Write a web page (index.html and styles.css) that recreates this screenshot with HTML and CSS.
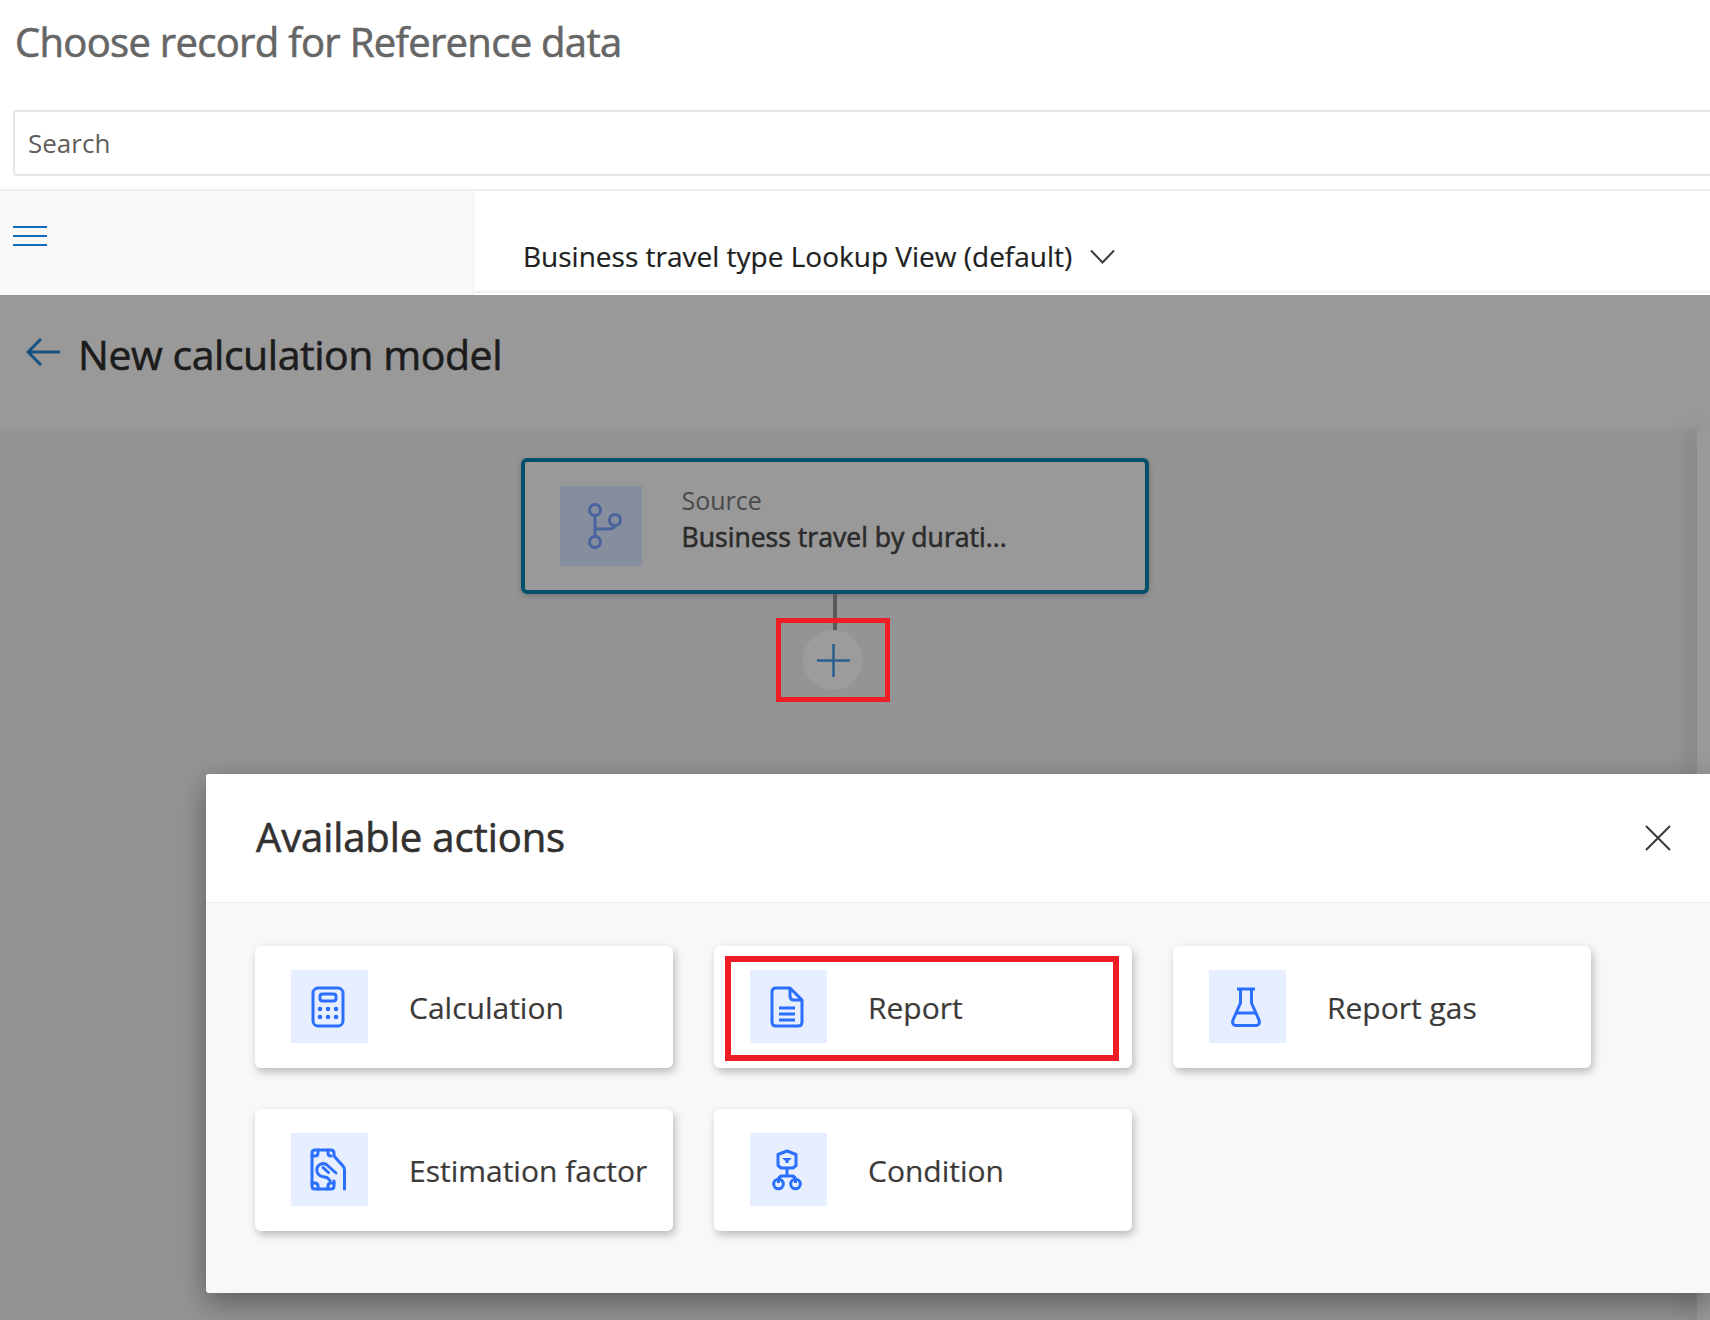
FILE: index.html
```html
<!DOCTYPE html>
<html lang="en">
<head>
  <meta charset="UTF-8">
  <title>New calculation model</title>
  <link rel="stylesheet" href="styles.css">
</head>
<body>
  <section class="picker">
    <h1>Choose record for Reference data</h1>
    <div class="search">Search</div>
    <div class="picker-row">
      <div class="nav">
        <svg class="burger" width="34" height="22" viewBox="0 0 34 22"><path d="M0 2h34M0 11h34M0 20h34" stroke="#0f6cbd" stroke-width="2" fill="none"/></svg>
      </div>
      <div class="view">
        <span>Business travel type Lookup View (default)</span>
        <svg width="25" height="15" viewBox="0 0 25 15"><path d="M1 1.500l11.500 12L24 1.500" stroke="#3a3a3a" stroke-width="2" fill="none"/></svg>
      </div>
    </div>
  </section>

  <main class="dimmed">
    <div class="title-bar">
      <svg class="back" width="34" height="30" viewBox="0 0 34 30"><path d="M15 2L2 15l13 13M2 15h32" stroke="#17507f" stroke-width="3" fill="none"/></svg>
      <h2>New calculation model</h2>
    </div>
    <div class="canvas">
      <div class="source-card">
        <div class="source-icon">
          <svg width="36" height="46" viewBox="0 0 36 46" fill="none" stroke="#49639f" stroke-width="3">
            <circle cx="8" cy="7" r="5.500"/><circle cx="8" cy="39" r="5.500"/><circle cx="28" cy="17" r="5.500"/>
            <path d="M8 12.500v21M8 26h13q6 0 7-3.500"/>
          </svg>
        </div>
        <div class="source-text">
          <span class="source-label">Source</span>
          <strong>Business travel by durati...</strong>
        </div>
      </div>
      <div class="connector"></div>
      <div class="add-wrap">
        <div class="add-btn">
          <svg width="33" height="33" viewBox="0 0 33 33"><path d="M16.500 0v33M0 16.500h33" stroke="#2a5f8f" stroke-width="2.500" fill="none"/></svg>
        </div>
      </div>
    </div>
    <div class="side-strip"></div>
  </main>

  <aside class="actions">
    <header class="actions-head">
      <h3>Available actions</h3>
      <svg class="close" width="26" height="26" viewBox="0 0 26 26"><path d="M1 1l24 24M25 1L1 25" stroke="#3b3a39" stroke-width="2" fill="none"/></svg>
    </header>
    <div class="actions-grid">
      <div class="action">
        <div class="action-icon">
          <svg width="34" height="42" viewBox="0 0 34 42" fill="none" stroke="#2b6fff" stroke-width="3">
            <rect x="2" y="2" width="30" height="38" rx="5"/><rect x="9" y="8" width="16" height="7" rx="2.500"/>
            <g fill="#2b6fff" stroke="none"><circle cx="9" cy="23" r="2.300"/><circle cx="17" cy="23" r="2.300"/><circle cx="25" cy="23" r="2.300"/><circle cx="9" cy="31" r="2.300"/><circle cx="17" cy="31" r="2.300"/><circle cx="25" cy="31" r="2.300"/></g>
          </svg>
        </div>
        <span>Calculation</span>
      </div>
      <div class="action">
        <div class="action-icon">
          <svg width="34" height="42" viewBox="0 0 34 42" fill="none" stroke="#2b6fff" stroke-width="3" stroke-linejoin="round">
            <path d="M20 2H6q-4 0-4 4v30q0 4 4 4h22q4 0 4-4V14z"/><path d="M20 2v8q0 4 4 4h8"/>
            <path d="M9 22h16M9 28h16M9 34h16"/>
          </svg>
        </div>
        <span>Report</span>
        <div class="mark"></div>
      </div>
      <div class="action">
        <div class="action-icon">
          <svg width="30" height="40" viewBox="0 0 30 40" fill="none" stroke="#2b6fff" stroke-width="3" stroke-linejoin="round">
            <path d="M6 2h18M9.500 2v14L2 33q-1.500 5 3 5.500h20q4.500-.5 3-5.500L20.500 16V2M6 26h18"/>
          </svg>
        </div>
        <span>Report gas</span>
      </div>
      <div class="action">
        <div class="action-icon">
          <svg width="36" height="43" viewBox="0 0 36 43" fill="none" stroke="#2b6fff" stroke-width="3" stroke-linecap="round" stroke-linejoin="round">
            <path d="M24 7V5q0-3-3-3H5Q2 2 2 5v33q0 3 3 3h16q3 0 3-3v-5"/>
            <path d="M2 8h3q3 0 3-3V2M18 2v3q0 3 3 3M2 35h3q3 0 3 3v3M18 41v-3q0-3 3-3h3"/>
            <path d="M24 8l9 10q1.500 1.500 1.500 4v19"/>
            <path d="M26 25l-9-8q-3-2.500-7-.5-4 2.500-3 7 1 4 5 5l5 1 3 3"/>
            <path d="M13 19.500l5.500 5"/>
          </svg>
        </div>
        <span>Estimation factor</span>
      </div>
      <div class="action">
        <div class="action-icon">
          <svg width="30" height="42" viewBox="0 0 30 42" fill="none" stroke="#2b6fff" stroke-width="3" stroke-linejoin="round">
            <path d="M15 2l9 3.500v11l-3 2.500H9l-3-2.500v-11z"/>
            <path d="M10 9h10l-3.500 3v2h-3v-2z" fill="#2b6fff" stroke="none"/>
            <path d="M15 19v8M6.500 34v-3q0-4 4-4h9q4 0 4 4v3"/>
            <circle cx="6.500" cy="35" r="4.800"/><circle cx="23.500" cy="35" r="4.800"/>
          </svg>
        </div>
        <span>Condition</span>
      </div>
    </div>
  </aside>
</body>
</html>
```

FILE: styles.css
```css
* {
  margin: 0;
  padding: 0;
  box-sizing: border-box;
}

html, body {
  height: 1320px;
  overflow: hidden;
}

body {
  position: relative;
  font-family: "Open Sans", "Noto Sans", sans-serif;
  background-color: #949494;
  color: #323130;
}

/* top part, the record picker */
.picker {
  height: 295px;
  background-color: #fff;
  display: flex;
  flex-direction: column;
}

.picker h1 {
  height: 110px;
  padding: 18px 0 0 15px;
  font-size: 40px;
  line-height: 48px;
  font-weight: 400;
  color: #666;
  letter-spacing: -0.7px;
  -webkit-text-stroke: 0.6px #666;
}

.search {
  height: 66px;
  margin-left: 13px;
  padding-left: 13px;
  border: 2px solid #e6e6e6;
  border-right: none;
  border-radius: 3px 0 0 3px;
  font-size: 26px;
  line-height: 62px;
  color: #605e5c;
}

.picker-row {
  flex: 1;
  margin-top: 13px;
  border-top: 2px solid #eee;
  display: flex;
}

.nav {
  width: 474px;
  padding: 34px 0 0 13px;
  background-color: #faf9f8;
  border-right: 1px solid #f0efee;
}

.burger {
  display: block;
}

.view {
  flex: 1;
  height: 102px;
  padding: 30px 0 0 49px;
  border-bottom: 2px solid #f0f0f0;
  display: flex;
  align-items: center;
  gap: 18px;
  font-size: 28px;
  color: #201f1e;
  -webkit-text-stroke: 0.2px #201f1e;
}

/* page behind the dimming overlay */
.dimmed {
  position: relative;
  height: 1025px;
}

.title-bar {
  height: 134px;
  padding: 0 0 0 26px;
  background-color: #999;
  display: flex;
  align-items: flex-start;
}

.back {
  margin-top: 42px;
}

.title-bar h2 {
  margin: 31px 0 0 18px;
  font-size: 41px;
  line-height: 56px;
  font-weight: 400;
  color: #1c1c1c;
  letter-spacing: -0.45px;
  -webkit-text-stroke: 0.6px #1c1c1c;
}

.canvas {
  display: flex;
  flex-direction: column;
  align-items: center;
  padding-top: 29px;
  width: 1670px;
}

.source-card {
  width: 628px;
  height: 136px;
  margin-left: -1px;
  border: 4px solid #004f6b;
  border-radius: 6px;
  padding: 24px 0 0 35px;
  display: flex;
  box-shadow: 0 2px 6px rgba(0, 0, 0, 0.2);
  background-color: #999;
}

.source-icon {
  width: 82px;
  height: 80px;
  padding-left: 8px;
  background-color: #868d9e;
  display: flex;
  align-items: center;
  justify-content: center;
}

.source-text {
  margin-left: 40px;
  display: flex;
  flex-direction: column;
}

.source-label {
  font-size: 25px;
  line-height: 34px;
  margin-top: -3px;
  color: #4a4a4a;
}

.source-text strong {
  margin-top: 1px;
  font-size: 26.600px;
  line-height: 38px;
  font-weight: 400;
  color: #2b2b2b;
  -webkit-text-stroke: 0.6px #2b2b2b;
}

.connector {
  width: 4px;
  height: 38px;
  background-color: #595959;
}

.add-wrap {
  position: relative;
  margin: -14px 4px 0 0;
  width: 114px;
  height: 84px;
  border: 5px solid #ee1c25;
  display: flex;
  align-items: center;
  justify-content: center;
}

.add-btn {
  width: 60px;
  height: 60px;
  border-radius: 50%;
  background-color: #9c9c9c;
  display: flex;
  align-items: center;
  justify-content: center;
}

.side-strip {
  position: absolute;
  top: 134px;
  right: 0;
  bottom: 0;
  width: 13px;
  background-color: #999;
  box-shadow: -8px 0 20px rgba(0, 0, 0, 0.12);
}

/* bottom panel */
.actions {
  position: absolute;
  left: 206px;
  top: 774px;
  right: 0;
  height: 519px;
  border-radius: 3px 0 0 3px;
  background-color: #f8f8f8;
  box-shadow: 0 10px 30px rgba(0, 0, 0, 0.38);
}

.actions-head {
  height: 129px;
  padding: 0 39px 0 50px;
  border-radius: 3px 0 0 0;
  background-color: #fff;
  border-bottom: 1px solid #eee;
  display: flex;
  align-items: center;
  justify-content: space-between;
}

.actions-head h3 {
  margin-top: -4px;
  font-size: 40px;
  font-weight: 400;
  color: #323130;
  letter-spacing: -0.1px;
  -webkit-text-stroke: 0.6px #323130;
}

.actions-grid {
  display: grid;
  grid-template-columns: repeat(3, 418px);
  grid-auto-rows: 122px;
  gap: 41px;
  padding: 43px 0 0 49px;
}

.action {
  position: relative;
  background-color: #fff;
  border-radius: 6px;
  box-shadow: 2px 4px 8px rgba(0, 0, 0, 0.25);
  padding: 24px 0 0 36px;
  display: flex;
  align-items: flex-start;
  font-size: 30px;
  color: #3b3a39;
  -webkit-text-stroke: 0.2px #3b3a39;
}

.action span {
  margin: 17px 0 0 41px;
  line-height: 42px;
}

.action-icon {
  width: 77px;
  height: 73px;
  padding-right: 4px;
  background-color: #e6eeff;
  display: flex;
  align-items: center;
  justify-content: center;
}

.mark {
  position: absolute;
  left: 11px;
  top: 10px;
  width: 394px;
  height: 105px;
  border: 6px solid #ee1c25;
}
```
